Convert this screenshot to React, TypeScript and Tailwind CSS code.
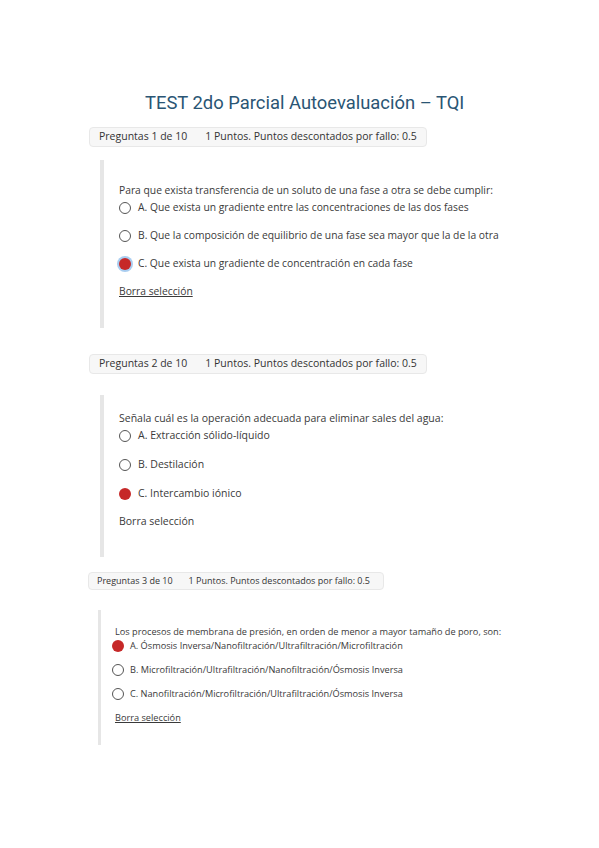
import React from "react";

type Option = { label: string; selected?: boolean };

type Question = {
  n: number;
  prompt: string;
  options: Option[];
  underline: boolean;
};

const questions: Question[] = [
  {
    n: 1,
    prompt: "Para que exista transferencia de un soluto de una fase a otra se debe cumplir:",
    options: [
      { label: "A. Que exista un gradiente entre las concentraciones de las dos fases" },
      { label: "B. Que la composición de equilibrio de una fase sea mayor que la de la otra" },
      { label: "C. Que exista un gradiente de concentración en cada fase", selected: true },
    ],
    underline: true,
  },
  {
    n: 2,
    prompt: "Señala cuál es la operación adecuada para eliminar sales del agua:",
    options: [
      { label: "A. Extracción sólido-líquido" },
      { label: "B. Destilación" },
      { label: "C. Intercambio iónico", selected: true },
    ],
    underline: false,
  },
  {
    n: 3,
    prompt: "Los procesos de membrana de presión, en orden de menor a mayor tamaño de poro, son:",
    options: [
      { label: "A. Ósmosis Inversa/Nanofiltración/Ultrafiltración/Microfiltración", selected: true },
      { label: "B. Microfiltración/Ultrafiltración/Nanofiltración/Ósmosis Inversa" },
      { label: "C. Nanofiltración/Microfiltración/Ultrafiltración/Ósmosis Inversa" },
    ],
    underline: true,
  },
];

function Radio({ selected, glow }: { selected?: boolean; glow?: boolean }) {
  if (selected) {
    return (
      <span
        className={
          glow
            ? "h-3 w-3 shrink-0 rounded-full bg-[#c62828] shadow-[0_0_0_2px_#a9cdf0]"
            : "h-3 w-3 shrink-0 rounded-full bg-[#c62828]"
        }
      />
    );
  }
  return <span className="h-3 w-3 shrink-0 rounded-full border border-[#555]" />;
}

function Header({ n, small }: { n: number; small?: boolean }) {
  return (
    <div
      className={
        small
          ? "flex h-[18px] w-[296px] items-center gap-[16px] whitespace-nowrap rounded-sm border border-[#e8e8e8] bg-[#f7f7f7] pl-2 text-[9px] text-[#333]"
          : "flex h-[20px] items-center gap-[18px] self-start whitespace-nowrap rounded-sm border border-[#e8e8e8] bg-[#f7f7f7] pl-[9px] pr-[9px] text-[10.5px] text-[#333]"
      }
    >
      <span>Preguntas {n} de 10</span>
      <span>1 Puntos. Puntos descontados por fallo: 0.5</span>
    </div>
  );
}

export default function App() {
  const [q1, q2, q3] = questions;
  return (
    <div className="min-h-[848px] w-[599px] bg-white font-['Open_Sans',sans-serif] text-[#3a3a3a]">
      <h1 className="pl-[145px] pt-[90px] font-['Roboto',sans-serif] text-[18.4px] leading-[26px] text-[#2a5574]">
        TEST 2do Parcial Autoevaluación – TQI
      </h1>

      {/* question 1 */}
      <div className="ml-[89px] mt-[11px] flex flex-col">
        <Header n={q1.n} />
        <div className="ml-[11px] mt-[13px] h-[168px] border-l-4 border-[#e6e6e6] pl-[15px] pt-[23px] text-[10.3px]">
          <p className="leading-[14px]">{q1.prompt}</p>
          <div className="mt-[3px] flex flex-col gap-[12px]">
            {q1.options.map((o) => (
              <div key={o.label} className="flex h-[16px] items-center gap-[7px]">
                <Radio selected={o.selected} glow />
                <span>{o.label}</span>
              </div>
            ))}
          </div>
          <p className="mt-[12px] underline leading-[14px]">Borra selección</p>
        </div>
      </div>

      {/* question 2 */}
      <div className="ml-[89px] mt-[26px] flex flex-col">
        <Header n={q2.n} />
        <div className="ml-[11px] mt-[21px] h-[162px] border-l-4 border-[#e6e6e6] pl-[15px] pt-[16px] text-[10.5px]">
          <p className="leading-[14px]">{q2.prompt}</p>
          <div className="mt-[3px] flex flex-col gap-[13px]">
            {q2.options.map((o) => (
              <div key={o.label} className="flex h-[16px] items-center gap-[7px]">
                <Radio selected={o.selected} />
                <span>{o.label}</span>
              </div>
            ))}
          </div>
          <p className="mt-[12px] leading-[14px]">Borra selección</p>
        </div>
      </div>

      {/* question 3 */}
      <div className="ml-[88px] mt-[15px] flex flex-col">
        <Header n={q3.n} small />
        <div className="ml-[10px] mt-[20px] h-[135px] border-l-[3px] border-[#e6e6e6] pl-[14px] pt-[16px] text-[9.2px]">
          <p className="leading-[12px]">{q3.prompt}</p>
          <div className="mt-[1px] flex flex-col gap-[11px]">
            {q3.options.map((o) => (
              <div key={o.label} className="-ml-[3px] flex h-[13px] items-center gap-[6px]">
                <Radio selected={o.selected} />
                <span>{o.label}</span>
              </div>
            ))}
          </div>
          <p className="mt-[12px] underline leading-[12px]">Borra selección</p>
        </div>
      </div>
    </div>
  );
}
